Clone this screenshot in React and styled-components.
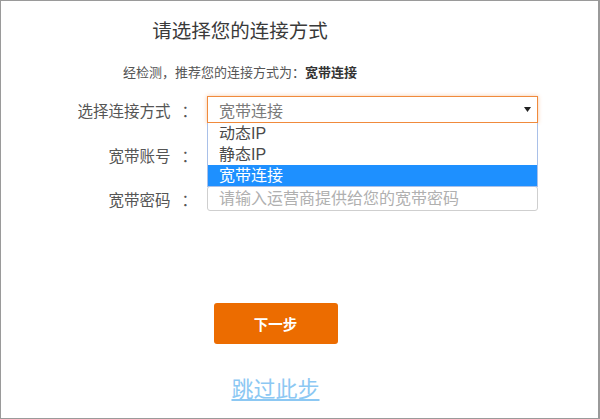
import React from "react";
import styled, { createGlobalStyle } from "styled-components";

const GlobalStyle = createGlobalStyle`
  html, body {
    margin: 0;
    padding: 0;
    background: #fff;
  }
  body {
    font-family: "Liberation Sans", "Noto Sans CJK SC", sans-serif;
  }
`;

const Frame = styled.div`
  width: 600px;
  height: 419px;
  box-sizing: border-box;
  border: 1px solid #9a9a9a;
  border-right-width: 2px;
  padding-top: 16px;
  display: flex;
  flex-direction: column;
  background: #fff;
`;

const Header = styled.div`
  width: 478px;
  text-align: center;
`;

const Title = styled.h1`
  margin: 0;
  font-size: 19.5px;
  line-height: 28px;
  font-weight: normal;
  color: #3a3a3a;
`;

const Subtitle = styled.p`
  margin: 18px 0 0;
  font-size: 13px;
  line-height: 20px;
  color: #555;

  strong {
    color: #333;
    font-weight: bold;
  }
`;

const Form = styled.div`
  margin-top: 13px;
  display: grid;
  grid-template-columns: 196px 331px;
  grid-auto-rows: 25px;
  grid-template-rows: 27px;
  column-gap: 10px;
  row-gap: 19px;
`;

const Label = styled.label`
  display: flex;
  align-items: center;
  justify-content: flex-end;
  font-size: 15.5px;
  color: #555;

  span {
    margin-left: 11px;
  }
`;

const SelectWrap = styled.div`
  position: relative;
`;

const SelectBox = styled.div`
  height: 100%;
  box-sizing: border-box;
  border: 1px solid #f08a3c;
  box-shadow: 0 0 4px rgba(240, 130, 50, 0.45);
  display: flex;
  align-items: center;
  justify-content: space-between;
  padding: 0 6px 0 11px;
  font-size: 16px;
  color: #7a7a7a;
`;

const OptionList = styled.ul`
  position: absolute;
  top: 100%;
  left: 0;
  right: 0;
  margin: 0;
  padding: 0;
  list-style: none;
  background: #fff;
  border: 1px solid #a9c0e8;
  border-top: none;
  z-index: 2;
`;

const Option = styled.li`
  height: 21px;
  line-height: 21px;
  padding-left: 11px;
  font-size: 16px;
  color: ${(p) => (p.$selected ? "#fff" : "#4a4a4a")};
  background: ${(p) => (p.$selected ? "#1e90ff" : "transparent")};
`;

const Input = styled.input`
  width: 100%;
  height: 100%;
  box-sizing: border-box;
  border: 1px solid #cfcfcf;
  border-radius: 3px;
  padding: 0 11px;
  font-family: inherit;
  font-size: 16px;
  color: #333;
  outline: none;

  &::placeholder {
    color: #b0b0b0;
  }
`;

const Footer = styled.div`
  padding-right: 48px;
  display: flex;
  flex-direction: column;
  align-items: center;
`;

const NextButton = styled.button`
  margin-top: 92px;
  width: 124px;
  height: 41px;
  border: none;
  border-radius: 3px;
  background: #ec6c00;
  color: #fff;
  font-family: inherit;
  font-size: 14.5px;
  font-weight: bold;
  cursor: pointer;
`;

const SkipLink = styled.a`
  margin-top: 31px;
  font-size: 22px;
  line-height: 30px;
  color: #8cc8f3;
  text-decoration: underline;
  cursor: pointer;
`;

const Arrow = () => (
  <svg width="7" height="5" viewBox="0 0 7 5">
    <polygon points="0,0 7,0 3.5,5" fill="#222" />
  </svg>
);

const options = ["动态IP", "静态IP", "宽带连接"];

export default function App() {
  const selected = "宽带连接";
  return (
    <>
      <GlobalStyle />
      <Frame>
        <Header>
          <Title>请选择您的连接方式</Title>
          <Subtitle>
            经检测，推荐您的连接方式为：<strong>宽带连接</strong>
          </Subtitle>
        </Header>
        <Form>
          <Label>
            选择连接方式<span>：</span>
          </Label>
          <SelectWrap>
            <SelectBox>
              {selected}
              <Arrow />
            </SelectBox>
            <OptionList>
              {options.map((o) => (
                <Option key={o} $selected={o === selected}>
                  {o}
                </Option>
              ))}
            </OptionList>
          </SelectWrap>
          <Label>
            宽带账号<span>：</span>
          </Label>
          <Input type="text" />
          <Label>
            宽带密码<span>：</span>
          </Label>
          <Input type="password" placeholder="请输入运营商提供给您的宽带密码" />
        </Form>
        <Footer>
          <NextButton>下一步</NextButton>
          <SkipLink>跳过此步</SkipLink>
        </Footer>
      </Frame>
    </>
  );
}
